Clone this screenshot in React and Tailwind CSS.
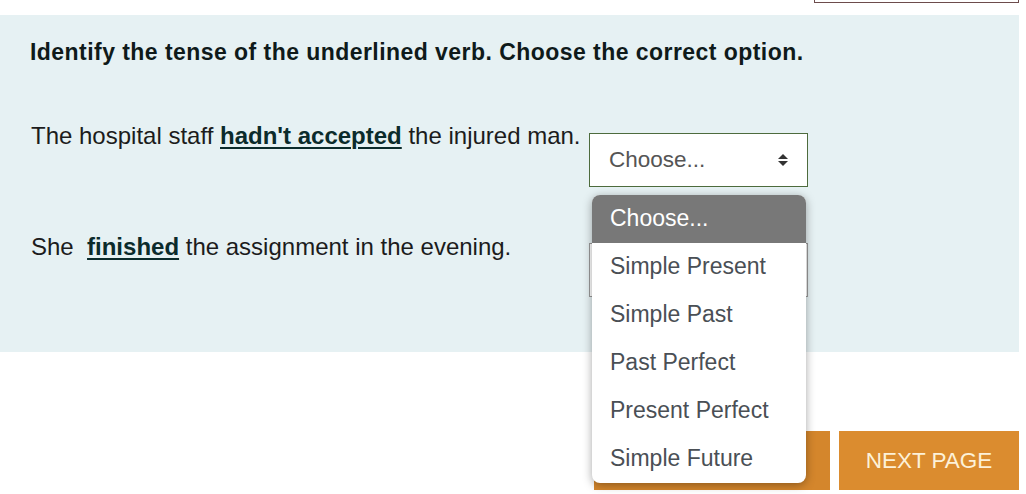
import { useState } from 'react'

const options = ['Choose...', 'Simple Present', 'Simple Past', 'Past Perfect', 'Present Perfect', 'Simple Future']

function SelectArrows() {
  return (
    <svg width="12" height="14" viewBox="0 0 12 14" className="text-[#333]">
      <path d="M6 1 L11 6 L1 6 Z" fill="currentColor" />
      <path d="M1 8 L11 8 L6 13 Z" fill="currentColor" />
    </svg>
  )
}

function FakeSelect({ className = '' }) {
  return (
    <div
      className={`h-[54px] w-[219px] bg-white flex items-center justify-between pl-[19px] pr-[18px] text-[22.5px] text-[#555] ${className}`}
    >
      <span>Choose...</span>
      <SelectArrows />
    </div>
  )
}

export default function App() {
  const [active] = useState(0)

  return (
    <div
      className="relative w-[1026px] h-[494px] overflow-hidden bg-white text-[#1c1c1c]"
      style={{ fontFamily: '"Liberation Sans", Arial, sans-serif' }}
    >
      {/* top strip */}
      <div className="h-[15px] flex justify-end pr-[7px]">
        <div className="w-[205px] h-[3px] border-x border-b border-[#6d4c4c]" />
      </div>

      {/* question panel */}
      <div className="mr-[7px] h-[337px] bg-[#e6f1f3] pl-[30px] pt-[23px]">
        <h2 className="text-[23px] leading-[28px] font-bold tracking-[0.45px] text-[#0f1a1a]">
          Identify the tense of the underlined verb. Choose the correct option.
        </h2>

        <div className="mt-[56px] grid grid-cols-[559px_219px] gap-y-[46px]">
          <p className="text-[24px] leading-[28px] pl-px">
            The hospital staff{' '}
            <span className="font-bold text-[#0b2b2b] underline decoration-2 underline-offset-[3px]">
              hadn't accepted
            </span>{' '}
            the injured man.
          </p>
          <FakeSelect className="mt-[11px] border border-[#4d6b3d]" />

          <p className="text-[24px] leading-[28px] pl-px">
            She{'\u00a0 '}
            <span className="font-bold text-[#0b2b2b] underline decoration-2 underline-offset-[3px]">
              finished
            </span>{' '}
            the assignment in the evening.
          </p>
          <FakeSelect className="mt-[10px] border border-[#9a9a9a]" />
        </div>
      </div>

      {/* buttons */}
      <div className="mt-[79px] flex justify-end gap-[9px] pr-[7px]">
        <button className="w-[236px] h-[59px] bg-[#d4862c] text-[#fdf1d8] text-[22.5px]">
          PREVIOUS PAGE
        </button>
        <button className="w-[180px] h-[59px] bg-[#db8c2f] text-[#fdf1d8] text-[22.5px]">
          NEXT PAGE
        </button>
      </div>

      {/* open dropdown list */}
      <ul className="absolute left-[592px] top-[195px] w-[214px] bg-white rounded-[8px] overflow-hidden shadow-[0_2px_10px_rgba(0,0,0,0.35)]">
        {options.map((opt, i) => (
          <li
            key={opt}
            className={`h-[48px] flex items-center pl-[18px] pb-px text-[23px] ${
              i === active ? 'bg-[#787878] text-white' : 'text-[#4a4f55]'
            }`}
          >
            {opt}
          </li>
        ))}
      </ul>
    </div>
  )
}
